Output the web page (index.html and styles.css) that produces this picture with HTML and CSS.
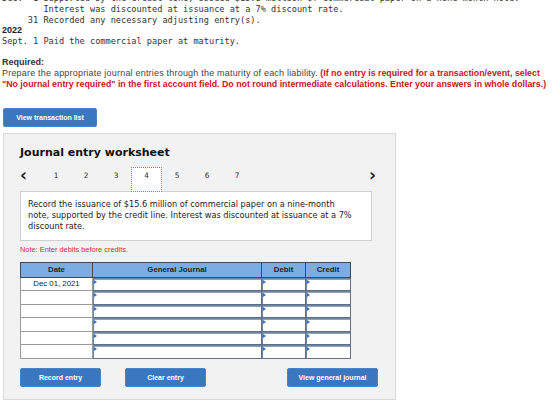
FILE: index.html
```html
<!DOCTYPE html>
<html lang="en">
  <head>
    <meta charset="UTF-8" />
    <title>Journal entry worksheet</title>
    <link rel="stylesheet" href="styles.css">
  </head>
  <body>
    <div class="problem">Dec.  1 Supported by the credit line, issued $15.6 million of commercial paper on a nine-month note.
        Interest was discounted at issuance at a 7% discount rate.
     31 Recorded any necessary adjusting entry(s).
<span class="year">2022</span>
Sept. 1 Paid the commercial paper at maturity.</div>

    <div class="required">
      <div class="req-title">Required:</div>
      <span class="plain">Prepare the appropriate journal entries through the maturity of each liability.</span>
      <span class="warn">(If no entry is required for a transaction/event, select "No journal entry required" in the first account field. Do not round intermediate calculations. Enter your answers in whole dollars.)</span>
    </div>

    <button class="btn btn-list">View transaction list</button>

    <div class="worksheet">
      <h2>Journal entry worksheet</h2>
      <div class="tabs">
        <span class="arrow prev">&lsaquo;</span>
        <span class="tab">1</span>
        <span class="tab">2</span>
        <span class="tab">3</span>
        <span class="tab active">4</span>
        <span class="tab">5</span>
        <span class="tab">6</span>
        <span class="tab">7</span>
        <span class="arrow next">&rsaquo;</span>
      </div>
      <div class="desc">
        Record the issuance of $15.6 million of commercial paper on a nine-month note, supported by the credit line. Interest was discounted at issuance at a 7% discount rate.
      </div>
      <div class="note">Note: Enter debits before credits.</div>

      <table class="journal">
        <colgroup>
          <col class="c-date" />
          <col class="c-gj" />
          <col class="c-dr" />
          <col class="c-cr" />
        </colgroup>
        <thead>
          <tr><th>Date</th><th>General Journal</th><th>Debit</th><th>Credit</th></tr>
        </thead>
        <tbody>
          <tr><td class="date">Dec 01, 2021</td><td class="in"><div class="field"></div></td><td class="in"><div class="field"></div></td><td class="in"><div class="field"></div></td></tr>
          <tr><td class="date"></td><td class="in"><div class="field"></div></td><td class="in"><div class="field"></div></td><td class="in"><div class="field"></div></td></tr>
          <tr><td class="date"></td><td class="in"><div class="field"></div></td><td class="in"><div class="field"></div></td><td class="in"><div class="field"></div></td></tr>
          <tr><td class="date"></td><td class="in"><div class="field"></div></td><td class="in"><div class="field"></div></td><td class="in"><div class="field"></div></td></tr>
          <tr><td class="date"></td><td class="in"><div class="field"></div></td><td class="in"><div class="field"></div></td><td class="in"><div class="field"></div></td></tr>
          <tr><td class="date"></td><td class="in"><div class="field"></div></td><td class="in"><div class="field"></div></td><td class="in"><div class="field"></div></td></tr>
        </tbody>
      </table>

      <div class="actions">
        <button class="btn btn-record">Record entry</button>
        <button class="btn btn-clear">Clear entry</button>
        <button class="btn btn-view">View general journal</button>
      </div>
    </div>
  </body>
</html>
```

FILE: styles.css
```css
body {
  margin: 0;
  padding: 0 0 0 2px;
  background: #fff;
  color: #333;
  font-family: "Liberation Sans", Arial, sans-serif;
  overflow: hidden;
}
.problem {
  margin-top: -7px;
  font-family: "DejaVu Sans Mono", monospace;
  font-size: 8.6px;
  line-height: 10.8px;
  white-space: pre;
  color: #333;
}
.year {
  font-family: "Liberation Sans", Arial, sans-serif;
  font-weight: bold;
  font-size: 9px;
  color: #222;
}
.required {
  margin-top: 10px;
  width: 556px;
  font-size: 9px;
  line-height: 11px;
  color: #444;
}
.plain {
  letter-spacing: 0.2px;
}
.req-title {
  font-weight: bold;
  color: #333;
}
.warn {
  color: #c8161d;
  font-size: 8.8px;
  font-weight: bold;
}
.btn {
  display: block;
  border: 1px solid #4a84c8;
  border-radius: 2px;
  background: #3b77bf;
  color: #fff;
  font-family: "Liberation Sans", Arial, sans-serif;
  font-size: 7px;
  font-weight: bold;
  padding: 0;
  height: 19px;
  cursor: pointer;
}
.btn-list {
  margin: 18px 0 0 1px;
  width: 94px;
}
.worksheet {
  margin: 6px 0 0 1px;
  width: 393px;
  box-sizing: border-box;
  background: #f2f2f2;
  border: 1px solid #d8d8d8;
  padding: 12px 23px 12px 16px;
}
.worksheet h2 {
  margin: 0;
  font-family: "DejaVu Sans", Verdana, sans-serif;
  font-size: 11px;
  line-height: 14px;
  font-weight: bold;
  color: #111;
}
.tabs {
  display: flex;
  align-items: flex-start;
  height: 25px;
  margin-top: 7px;
  font-family: "DejaVu Sans", Verdana, sans-serif;
  font-size: 7.4px;
  color: #333;
}
.arrow {
  font-size: 17px;
  line-height: 16px;
  font-weight: bold;
  color: #222;
}
.prev {
  width: 21px;
}
.next {
  margin-left: auto;
  margin-right: -4px;
}
.tab {
  width: 30px;
  height: 25px;
  line-height: 17px;
  text-align: center;
  box-sizing: border-box;
}
.tab.active {
  width: 31px;
  line-height: 15px;
  background: #fff;
  border: 1px dotted #5b8ad0;
  position: relative;
  z-index: 1;
}
.desc {
  margin-top: -1px;
  background: #fff;
  border: 1px solid #cfcfcf;
  padding: 7px 17px 7px 7px;
  height: 50px;
  box-sizing: border-box;
  font-family: "DejaVu Sans", Verdana, sans-serif;
  font-size: 8.2px;
  line-height: 10.8px;
  color: #222;
}
.note {
  margin-top: 4px;
  font-size: 7.4px;
  color: #d0312d;
}
.journal {
  margin-top: 8px;
  width: 330px;
  border-collapse: collapse;
  table-layout: fixed;
  font-size: 7.8px;
}
.c-date { width: 72px; }
.c-gj { width: 169px; }
.c-dr { width: 44px; }
.c-cr { width: 45px; }
.journal th {
  height: 14px;
  padding: 0;
  background: #7badE3;
  border: 1px solid #3e4a58;
  color: #222;
  font-weight: bold;
}
.journal td {
  height: 12.5px;
  padding: 0;
  line-height: 10px;
}
.journal td.date {
  background: #fff;
  border: 1px solid #9a9a9a;
  text-align: center;
  color: #222;
}
.journal td.in {
  border: 1px solid #5d7087;
  background: #6f86a2;
}
.field {
  position: relative;
  height: 10.5px;
  margin: 1px 0 0 1px;
  background: #fff;
  border-top: 1px solid #8fa1b8;
}
.field::before {
  content: "";
  position: absolute;
  left: 0;
  top: 0;
  border-top: 2px solid transparent;
  border-bottom: 2px solid transparent;
  border-left: 3px solid #2d6fd2;
}
.actions {
  display: flex;
  margin-top: 9px;
  margin-right: -6px;
}
.btn-record,
.btn-clear {
  width: 81px;
}
.btn-clear {
  margin-left: 24px;
}
.btn-view {
  width: 91px;
  margin-left: auto;
}
```
